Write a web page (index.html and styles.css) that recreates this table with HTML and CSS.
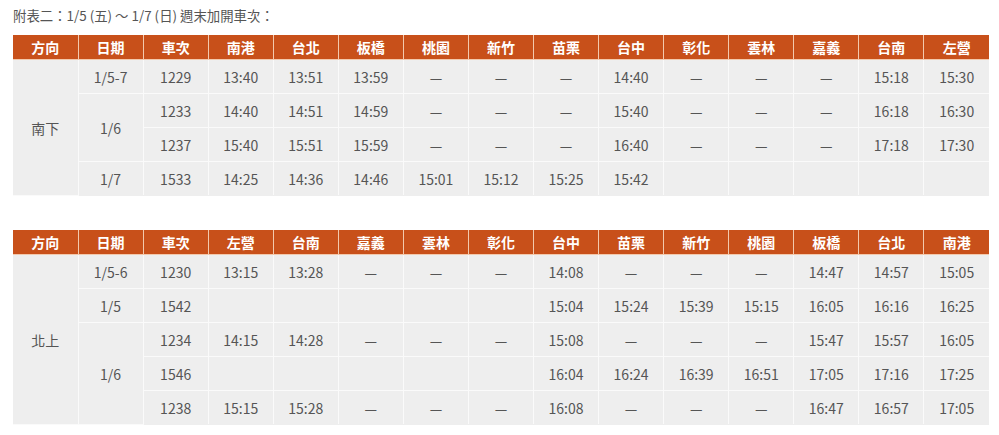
FILE: index.html
```html
<!DOCTYPE html>
<html lang="zh-Hant">
<head>
<meta charset="utf-8">
<link rel="stylesheet" href="styles.css">
</head>
<body>
<div class="page">
  <p class="title">附表二：1/5 (五) ～ 1/7 (日) 週末加開車次：</p>
  <table class="tt">
    <thead>
      <tr><th>方向</th><th>日期</th><th>車次</th><th>南港</th><th>台北</th><th>板橋</th><th>桃園</th><th>新竹</th><th>苗栗</th><th>台中</th><th>彰化</th><th>雲林</th><th>嘉義</th><th>台南</th><th>左營</th></tr>
    </thead>
    <tbody>
      <tr><td rowspan="4">南下</td><td>1/5-7</td><td>1229</td><td>13:40</td><td>13:51</td><td>13:59</td><td>—</td><td>—</td><td>—</td><td>14:40</td><td>—</td><td>—</td><td>—</td><td>15:18</td><td>15:30</td></tr>
      <tr><td rowspan="2">1/6</td><td>1233</td><td>14:40</td><td>14:51</td><td>14:59</td><td>—</td><td>—</td><td>—</td><td>15:40</td><td>—</td><td>—</td><td>—</td><td>16:18</td><td>16:30</td></tr>
      <tr><td>1237</td><td>15:40</td><td>15:51</td><td>15:59</td><td>—</td><td>—</td><td>—</td><td>16:40</td><td>—</td><td>—</td><td>—</td><td>17:18</td><td>17:30</td></tr>
      <tr><td>1/7</td><td>1533</td><td>14:25</td><td>14:36</td><td>14:46</td><td>15:01</td><td>15:12</td><td>15:25</td><td>15:42</td><td></td><td></td><td></td><td></td><td></td></tr>
    </tbody>
  </table>
  <table class="tt second">
    <thead>
      <tr><th>方向</th><th>日期</th><th>車次</th><th>左營</th><th>台南</th><th>嘉義</th><th>雲林</th><th>彰化</th><th>台中</th><th>苗栗</th><th>新竹</th><th>桃園</th><th>板橋</th><th>台北</th><th>南港</th></tr>
    </thead>
    <tbody>
      <tr><td rowspan="5">北上</td><td>1/5-6</td><td>1230</td><td>13:15</td><td>13:28</td><td>—</td><td>—</td><td>—</td><td>14:08</td><td>—</td><td>—</td><td>—</td><td>14:47</td><td>14:57</td><td>15:05</td></tr>
      <tr><td>1/5</td><td>1542</td><td></td><td></td><td></td><td></td><td></td><td>15:04</td><td>15:24</td><td>15:39</td><td>15:15</td><td>16:05</td><td>16:16</td><td>16:25</td></tr>
      <tr><td rowspan="3">1/6</td><td>1234</td><td>14:15</td><td>14:28</td><td>—</td><td>—</td><td>—</td><td>15:08</td><td>—</td><td>—</td><td>—</td><td>15:47</td><td>15:57</td><td>16:05</td></tr>
      <tr><td>1546</td><td></td><td></td><td></td><td></td><td></td><td>16:04</td><td>16:24</td><td>16:39</td><td>16:51</td><td>17:05</td><td>17:16</td><td>17:25</td></tr>
      <tr><td>1238</td><td>15:15</td><td>15:28</td><td>—</td><td>—</td><td>—</td><td>16:08</td><td>—</td><td>—</td><td>—</td><td>16:47</td><td>16:57</td><td>17:05</td></tr>
    </tbody>
  </table>
</div>
</body>
</html>
```
FILE: styles.css
```css
html, body {
  margin: 0;
  padding: 0;
  background: #fff;
}
.page {
  padding: 0 10px 0 13px;
  font-family: "Noto Sans CJK TC", "Noto Sans", sans-serif;
  color: #555;
}
.title {
  margin: 0;
  padding-top: 4px;
  height: 31px;
  line-height: 22px;
  font-size: 13.4px;
  color: #555;
}
.tt {
  width: 976px;
  border-collapse: collapse;
  table-layout: fixed;
  font-size: 14px;
}
.tt.second {
  margin-top: 34px;
}
.tt th {
  background: #c8501a;
  color: #fff;
  font-weight: 700;
  height: 24px;
  padding: 0;
  border: 1px solid #f3c9ad;
  border-top: 0;
  text-align: center;
  vertical-align: middle;
}
.tt th:first-child { border-left: 0; }
.tt th:last-child { border-right: 0; }
.tt td {
  background: #eeeeee;
  height: 33px;
  padding: 0;
  border: 1px solid #fafafa;
  text-align: center;
  vertical-align: middle;
  color: #555;
}
.tt td:last-child { border-right: 0; }
.tt tr > td[rowspan="4"], .tt tr > td[rowspan="5"] { border-left: 0; }
.tt tbody tr:last-child td { border-bottom: 1px solid #eeeeee; }
```
